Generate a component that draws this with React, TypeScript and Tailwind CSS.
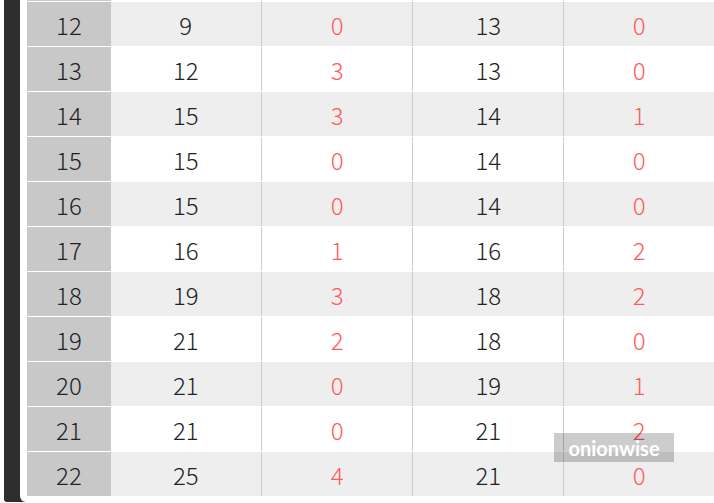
const rows: [number, number, number, number, number][] = [
  [12, 9, 0, 13, 0],
  [13, 12, 3, 13, 0],
  [14, 15, 3, 14, 1],
  [15, 15, 0, 14, 0],
  [16, 15, 0, 14, 0],
  [17, 16, 1, 16, 2],
  [18, 19, 3, 18, 2],
  [19, 21, 2, 18, 0],
  [20, 21, 0, 19, 1],
  [21, 21, 0, 21, 2],
  [22, 25, 4, 21, 0],
];

function Row({ cells, shaded }: { cells: (number | string)[]; shaded: boolean }) {
  const bg = shaded ? "bg-[#eeeeee]" : "bg-white";
  return (
    <div className="flex h-[45px] border-b border-white pt-[2px]">
      <div className="-mt-[2px] flex w-[84px] items-center justify-center bg-[#c8c8c8] pt-[2px] text-[#222]">
        {cells[0]}
      </div>
      <div className={`-mt-[2px] flex w-[150px] items-center justify-center pt-[2px] ${bg} text-[#222]`}>{cells[1]}</div>
      <div
        className={`-mt-[2px] flex w-[152px] items-center justify-center border-l border-[#cccccc] pt-[2px] ${bg} text-[#ff5a5a]`}
      >
        {cells[2]}
      </div>
      <div
        className={`-mt-[2px] flex w-[151px] items-center justify-center border-l border-[#cccccc] pt-[2px] ${bg} text-[#222]`}
      >
        {cells[3]}
      </div>
      <div
        className={`-mt-[2px] flex w-[151px] items-center justify-center border-l border-[#cccccc] pt-[2px] ${bg} text-[#ff5a5a]`}
      >
        {cells[4]}
      </div>
    </div>
  );
}

export default function App() {
  return (
    <div className="h-[503px] w-[714px] overflow-hidden bg-white pl-[4px]">
      <div className="h-[502px] rounded-b-[3px] bg-[#2c2e2c] pl-[16px]">
        <div className="relative h-full overflow-hidden rounded-bl-[6px] bg-white pl-[7px]">
          <div
            className="-mt-[43px] text-[24px] font-light leading-none"
            style={{ fontFamily: '"Noto Sans CJK JP", "Noto Sans", sans-serif' }}
          >
            <Row cells={["", "", "", "", ""]} shaded={false} />
            {rows.map((r, i) => (
              <Row key={r[0]} cells={r} shaded={i % 2 === 0} />
            ))}
          </div>
          <div
            className="absolute left-[534px] top-[433px] flex h-[29px] w-[120px] items-center justify-center bg-[rgba(0,0,0,0.2)] text-[20px] font-bold text-white"
            style={{ fontFamily: "Lato, sans-serif" }}
          >
            onionwise
          </div>
        </div>
      </div>
    </div>
  );
}
